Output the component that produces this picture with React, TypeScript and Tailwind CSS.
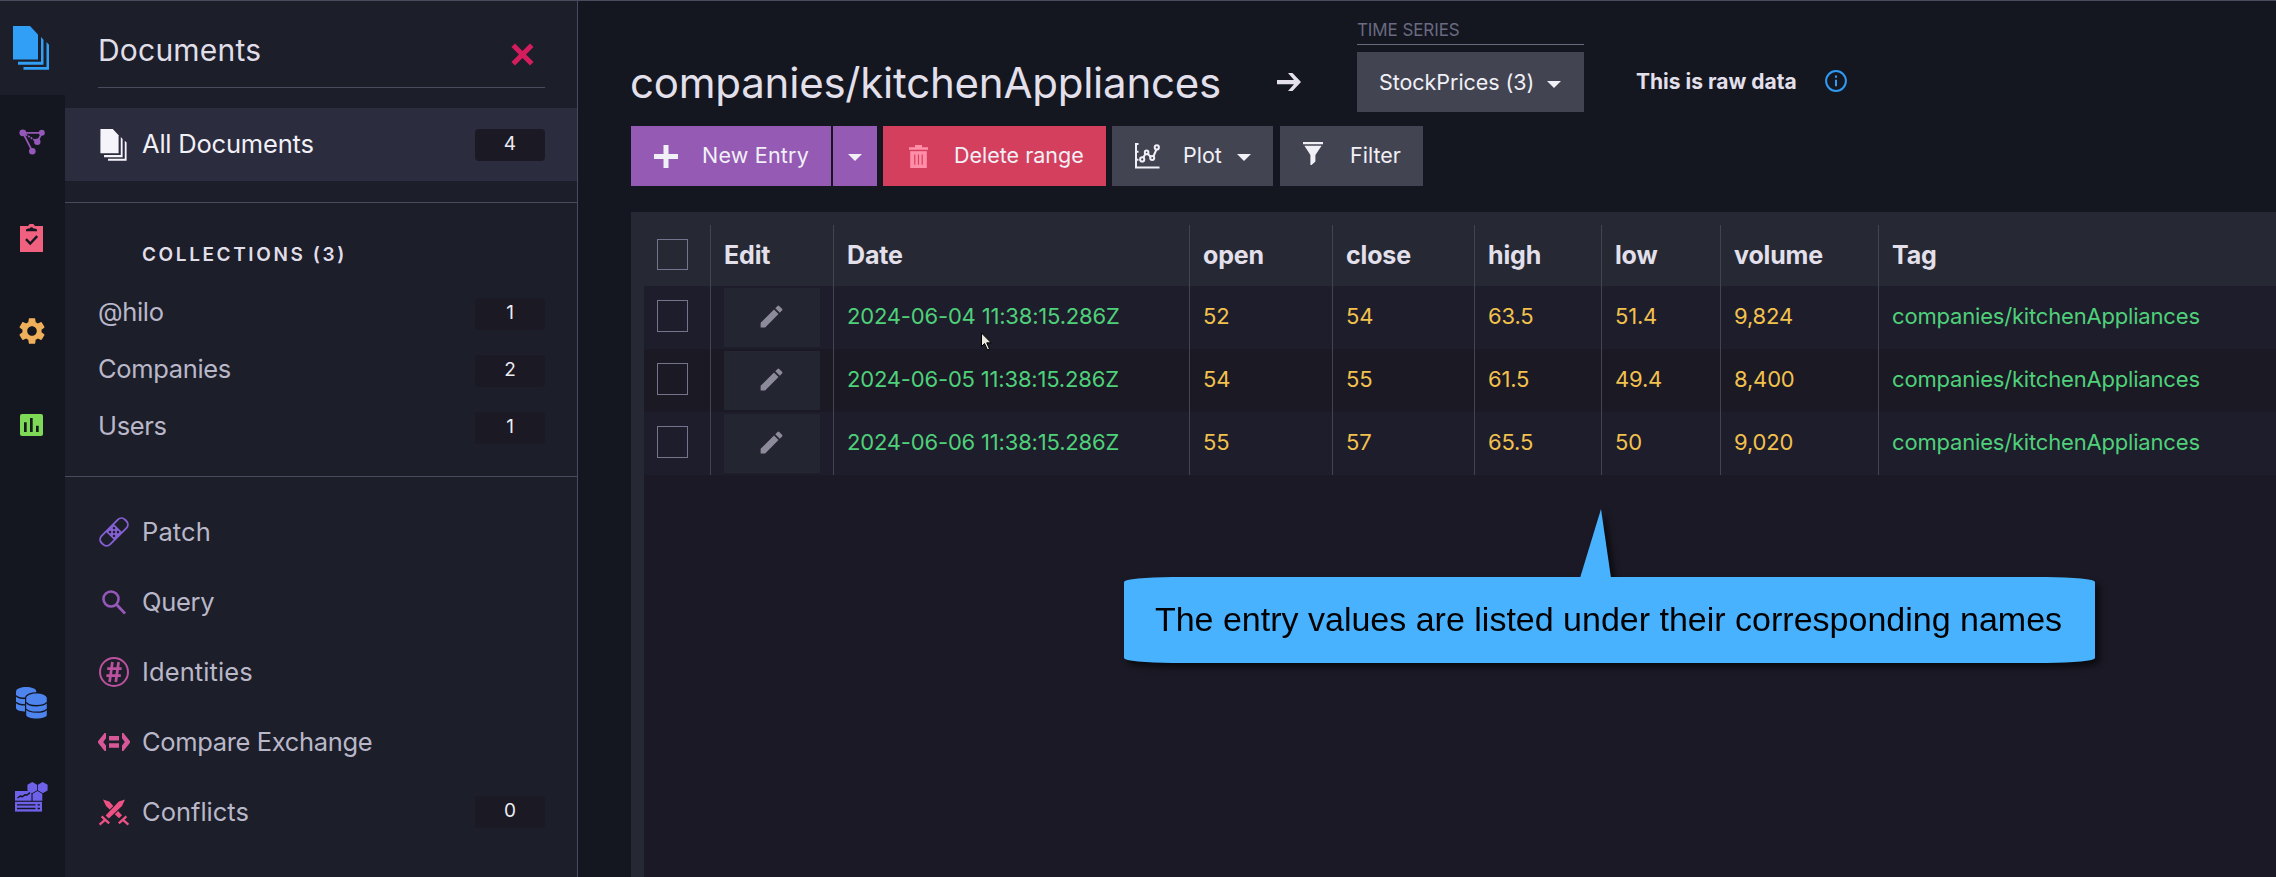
import React from "react";
import { MdEdit, MdSettings } from "react-icons/md";

const DocumentsIcon = ({ className }: { className: string }) => (
  <svg viewBox="0 0 36 44" className={className} fill="currentColor">
    <path d="M0 0h17l8 8.5v25H0z" />
    <path d="M5 35.8h23V11l2.5 2.7v25H5z" />
    <path d="M10.5 41h23V16l2.5 2.7v25H10.5z" />
  </svg>
);

const GraphIcon = () => (
  <svg viewBox="0 0 26 26" className="size-[26px]" fill="#9558b8" stroke="#9558b8">
    <path d="M4 3.8h19M4 3.8l9.3 18.4M23 3.8l-4.7 9" strokeWidth="1.8" fill="none" />
    <path d="M4 3.8l14.3 9" strokeWidth="1.8" strokeDasharray="2 1" fill="none" />
    <g stroke="none">
      <circle cx="3.8" cy="3.8" r="3.4" />
      <circle cx="22.8" cy="3.7" r="3" />
      <circle cx="18.3" cy="12.8" r="3.2" />
      <circle cx="13.3" cy="22.2" r="3.3" />
    </g>
  </svg>
);

const ClipboardIcon = () => (
  <svg viewBox="0 0 23 28" className="h-7 w-[23px]">
    <path d="M0 2h8.2a3.5 3.5 0 0 1 6.6 0H23v26H0z" fill="#f0607f" />
    <path d="M6 7.2V5.4L8 4.6h1.600a2 2 0 0 1 3.800 0H15l2 .8v1.800z" fill="#141620" />
    <path d="M6 15.2l4.2 4.3 7-7.4" fill="none" stroke="#141620" strokeWidth="2.4" />
  </svg>
);

const StatsIcon = () => (
  <svg viewBox="0 0 23 22" className="h-[22px] w-[23px]">
    <rect width="23" height="22" rx="2" fill="#7ed957" />
    <path d="M4 8.3h2.7V18H4zM10 4h2.7v14H10zM16 11.7h2.7V18H16z" fill="#141c20" />
  </svg>
);

const DatabasesIcon = () => (
  <svg viewBox="0 0 31 32" className="h-8 w-[31px]" fill="#4d84ee">
    <path d="M0 4.6C0-1.5 20.3-1.5 20.3 4.6V21c0 4.8-20.3 4.8-20.3 0z" />
    <path d="M0 8.6c2 2.6 7 2.8 11 2.6M0 15.2c2 2.4 6 2.8 11 2.6" fill="none" stroke="#141620" strokeWidth="1.4" />
    <path d="M10.2 11.2c0-6.4 20.6-6.4 20.6 0v16.6c0 5-20.6 5-20.6 0z" stroke="#141620" strokeWidth="2.4" paintOrder="stroke" />
    <path d="M10.2 15.4c2.5 4.4 18 4.4 20.6 0M10.2 22c2.5 4.2 18 4.2 20.6 0" fill="none" stroke="#141620" strokeWidth="1.4" />
  </svg>
);

const StudioIcon = () => (
  <svg viewBox="0 0 33 30" className="h-[30px] w-[33px]" fill="#6f62ea">
    <path d="M17.3 0l4.8 2.8v5.6l-4.8 2.8-4.9-2.8V2.8zM27.7 0l4.9 2.8v5.6l-4.9 2.8-4.8-2.8V2.8z" />
    <path d="M0 9h16.5v9.7H0z" />
    <path d="M2.5 16l3-2.2 1.5 1 3-2 2 .2 3-2.4" fill="none" stroke="#141620" strokeWidth="1.5" />
    <path d="M22.5 9l4.8 2.8v6.9h-9.7v-6.9z" stroke="#141620" strokeWidth="1.4" paintOrder="stroke" />
    <path d="M0 19.8h27v9.8H0z" />
    <path d="M2 22.9h18.5M2 26.5h18.5M22.5 22.9h2.5M22.5 26.5h2.5" stroke="#141620" strokeWidth="1.3" />
  </svg>
);

const PatchIcon = () => (
  <svg viewBox="0 0 30 30" className="size-[30px]">
    <g transform="rotate(-45 15 15)">
      <rect x="-1.5" y="9" width="33" height="12" rx="5" fill="none" stroke="#8560d4" strokeWidth="1.9" />
      <rect x="9.5" y="9" width="11" height="12" fill="#8560d4" />
      <g fill="#1c1e2a">
        <circle cx="12.2" cy="12.2" r="1.25" />
        <circle cx="17.8" cy="12.2" r="1.25" />
        <circle cx="15" cy="15" r="1.25" />
        <circle cx="12.2" cy="17.8" r="1.25" />
        <circle cx="17.8" cy="17.8" r="1.25" />
      </g>
    </g>
  </svg>
);

const QueryIcon = () => (
  <svg viewBox="0 0 24 25" className="h-[25px] w-6" fill="none" stroke="#9558b8">
    <circle cx="9" cy="9" r="7.5" strokeWidth="2.6" />
    <path d="M14 14l9 9.6" strokeWidth="2.8" />
  </svg>
);

const IdentitiesIcon = () => (
  <svg viewBox="0 0 30 30" className="size-[30px]" fill="none" stroke="#bb519f">
    <circle cx="15" cy="15" r="14" strokeWidth="2" />
    <path d="M13.4 5L10.6 25M19.6 5l-2.8 20M8.2 11.6h14.4M7.4 18.6h14.4" strokeWidth="2.7" />
  </svg>
);

const CompareIcon = () => (
  <svg viewBox="0 0 32 18" className="h-[18px] w-8 shrink-0" fill="#d75898">
    <path d="M8 0v5.2L5.2 9 8 12.6V18H6.6L0 9.8V8.2L6.6 0zM24 0v5.2L26.8 9 24 12.6V18h1.4L32 9.8V8.2L25.4 0z" />
    <path d="M11 3h10v4.6H11zM11 10.2h10v4.6H11z" />
  </svg>
);

const ConflictsIcon = () => (
  <svg viewBox="0 0 32 27" className="h-[27px] w-8 shrink-0" fill="#ee5285" stroke="#ee5285">
    <path d="M5 .6l6.2 2L24 16.2l-3 3L8 7z" stroke="none" />
    <path d="M20.8 24.4l7.6-7M24.4 20.4l6 5.2" strokeWidth="2.3" />
    <path d="M27 .6l-6.200 2L7.600 16.400l3.200 3.200L24 7z" stroke="#1c1e2a" strokeWidth="2" paintOrder="stroke" />
    <path d="M11.2 24.4l-7.600-7M7.600 20.400l-6 5.200" strokeWidth="2.3" />
  </svg>
);

const CloseIcon = () => (
  <svg viewBox="0 0 23 23" className="size-[23px]" stroke="#d31d5c" strokeWidth="5">
    <path d="M2.2 2.2l18.6 18.6M20.8 2.2L2.2 20.8" />
  </svg>
);

const Caret = () => (
  <svg viewBox="0 0 14 7" className="h-[7px] w-3.5 shrink-0" fill="#f1f0f7">
    <path d="M0 0h14L7 7z" />
  </svg>
);

const PlusIcon = () => (
  <svg viewBox="0 0 24 23" className="h-[23px] w-6 shrink-0" stroke="#f1f0f7" strokeWidth="5">
    <path d="M0 11.5h24M12 0v23" />
  </svg>
);

const TrashIcon = () => (
  <svg viewBox="0 0 19 23" className="h-[23px] w-[19px] shrink-0" fill="#ff8fa8">
    <path d="M0 2.3h6V0h7v2.3h6v2.4H0z" />
    <path d="M1.2 6.2h16.6V23H1.2z" />
    <path d="M5.8 9.5v10.2M9.5 9.5v10.2M13.2 9.5v10.2" stroke="#d43f5e" strokeWidth="1.2" />
  </svg>
);

const PlotIcon = () => (
  <svg viewBox="0 0 25 26" className="h-[26px] w-[25px] shrink-0" fill="none" stroke="#f1f0f7" strokeWidth="2">
    <path d="M3.5 1H1v23.5h23.5M1 8.8h2.5M1 16.8h2.5" />
    <path d="M8.3 14.6l2.2-3.8M13 10.8l2.8 3.4M18.6 13l3-7" />
    <circle cx="7.2" cy="16.4" r="2.1" />
    <circle cx="11.6" cy="9.4" r="1.8" />
    <circle cx="17.2" cy="15" r="2" />
    <circle cx="21.8" cy="4.4" r="2.1" />
  </svg>
);

const FilterIcon = () => (
  <svg viewBox="0 0 20 23" className="h-[23px] w-5 shrink-0" fill="#f1f0f7">
    <path d="M0 0h20v2.2H0zM1.4 3.8h17.2L12.4 13v6.6L8.6 23h-1.2V13z" />
  </svg>
);

const ArrowIcon = () => (
  <svg viewBox="0 0 24 18" className="h-[18px] w-6" fill="#e3e0ec">
    <path d="M11 0h4.5L24 9l-8.5 9H11l6-6.8H0V7h17z" />
  </svg>
);

const InfoIcon = () => (
  <svg viewBox="0 0 22 22" className="size-[22px]" fill="none" stroke="#2f9bf4">
    <circle cx="11" cy="11" r="9.9" strokeWidth="2" />
    <path d="M11 9.8v6.4M11 5.6v2.2" strokeWidth="2" />
  </svg>
);

const Badge = ({ children }: { children: React.ReactNode }) => (
  <span className="ml-auto flex h-8 w-[70px] items-center justify-center rounded bg-[#1a1924] pb-px text-[19px] text-[#ecebf2]">
    {children}
  </span>
);

const collections = [
  { name: "@hilo", count: 1 },
  { name: "Companies", count: 2 },
  { name: "Users", count: 1 },
];

const tools = [
  { name: "Patch", icon: <PatchIcon />, tracking: "tracking-[0.1px]" },
  { name: "Query", icon: <QueryIcon />, tracking: "tracking-[-0.3px]" },
  { name: "Identities", icon: <IdentitiesIcon />, tracking: "tracking-[0.1px]" },
  { name: "Compare Exchange", icon: <CompareIcon />, tracking: "tracking-[-0.35px]" },
  { name: "Conflicts", icon: <ConflictsIcon />, tracking: "tracking-normal", count: 0 },
];

const headers = ["Edit", "Date", "open", "close", "high", "low", "volume", "Tag"];

const rows = [
  ["2024-06-04 11:38:15.286Z", "52", "54", "63.5", "51.4", "9,824", "companies/kitchenAppliances"],
  ["2024-06-05 11:38:15.286Z", "54", "55", "61.5", "49.4", "8,400", "companies/kitchenAppliances"],
  ["2024-06-06 11:38:15.286Z", "55", "57", "65.5", "50", "9,020", "companies/kitchenAppliances"],
];

const columns = "grid grid-cols-[67px_123px_356px_143px_142px_127px_119px_158px_1fr]";
const cell = "flex items-center border-r border-[#444450] pl-[13px]";
const button = "flex h-[60px] items-center text-[21.5px] text-[#f1f0f7]";

const Rail = () => (
  <nav className="flex w-[65px] shrink-0 flex-col bg-[#141620] pb-[33px]">
    <div className="flex h-[94px] items-center bg-[#1c1e2a] pl-[13px]">
      <DocumentsIcon className="h-11 w-9 text-[#319ff5]" />
    </div>
    <div className="flex w-[63px] flex-col">
      <div className="flex h-[94px] items-center justify-center"><GraphIcon /></div>
      <div className="flex h-[97px] items-center justify-center"><ClipboardIcon /></div>
      <div className="flex h-[90px] items-center justify-center"><MdSettings className="size-8 text-[#efb05c]" /></div>
      <div className="flex h-[98px] items-center justify-center"><StatsIcon /></div>
    </div>
    <div className="mt-auto flex w-[63px] flex-col">
      <div className="flex h-[94px] items-center justify-center"><DatabasesIcon /></div>
      <div className="flex h-[94px] items-center justify-center"><StudioIcon /></div>
    </div>
  </nav>
);

const Panel = () => (
  <aside className="flex w-[513px] shrink-0 flex-col border-r border-[#4a4a5e] bg-[#1c1e2a]">
    <div className="ml-[33px] mr-8 flex h-[87px] items-center justify-between border-b border-[#4a4a5e] pr-[11px] pt-3">
      <h2 className="text-[30px] leading-none tracking-[0.2px] text-[#e0dee9]">Documents</h2>
      <div className="pt-2"><CloseIcon /></div>
    </div>
    <div className="mt-5 flex h-[73px] items-center bg-[#2b2c3e] pl-[35px] pr-8">
      <DocumentsIcon className="h-8 w-[27px] text-[#f6f4fb]" />
      <span className="pl-[15px] text-[25.5px] tracking-[-0.2px] text-[#f1f0f7]">All Documents</span>
      <Badge>4</Badge>
    </div>
    <div className="mt-[21px] border-y border-[#4a4a5e] pb-5 pt-[37px]">
      <h3 className="pb-4 pl-[77px] text-[19px] font-semibold leading-[29px] tracking-[2.6px] text-[#e0dee9]">COLLECTIONS (3)</h3>
      {collections.map((c) => (
        <div key={c.name} className="flex h-[57px] items-center pl-[33px] pr-8">
          <span className="pb-[3px] text-[25.5px] tracking-[-0.35px] text-[#b9b7c8]">{c.name}</span>
          <Badge>{c.count}</Badge>
        </div>
      ))}
    </div>
    <div className="pt-5">
      {tools.map((t) => (
        <div key={t.name} className="flex h-[70px] items-center pl-8 pr-8">
          <span className="flex w-[34px] justify-center">{t.icon}</span>
          <span className={`pl-[11px] text-[25.5px] text-[#b9b7c8] ${t.tracking}`}>{t.name}</span>
          {t.count !== undefined && <Badge>{t.count}</Badge>}
        </div>
      ))}
    </div>
  </aside>
);

const Header = () => (
  <header className="flex h-[111px] pl-[52px]">
    <h1 className="w-[647px] pt-[58px] text-[42px] leading-[48px] tracking-[-0.22px] text-[#e3e0ec]">companies/kitchenAppliances</h1>
    <div className="w-20 pt-[72px]"><ArrowIcon /></div>
    <div className="w-[227px]">
      <div className="flex h-11 items-end border-b border-[#6a6a80] pb-1 text-[17px] leading-[20px] tracking-[-0.1px] text-[#6a6a80]">TIME SERIES</div>
      <button className={`${button} mt-[7px] w-full bg-[#424452] pl-[22px] tracking-[-0.05px]`}>
        StockPrices (3)
        <span className="pl-[13px] pt-[5px]"><Caret /></span>
      </button>
    </div>
    <div className="pl-[52px] pt-[66px] text-[21px] font-bold leading-[30px] text-[#e3e0ec]">This is raw data</div>
    <div className="pl-7 pt-[69px]"><InfoIcon /></div>
  </header>
);

const Toolbar = () => (
  <div className="flex pl-[53px] pt-3.5">
    <button className={`${button} w-[200px] bg-[#955ab4] pl-[23px]`}>
      <PlusIcon />
      <span className="pb-0.5 pl-6 tracking-[0.2px]">New Entry</span>
    </button>
    <button className={`${button} ml-0.5 w-11 justify-center bg-[#955ab4] pt-[3px]`}><Caret /></button>
    <button className={`${button} ml-1.5 w-[223px] bg-[#d43f5e] pl-[26px]`}>
      <TrashIcon />
      <span className="pb-0.5 pl-[26px]">Delete range</span>
    </button>
    <button className={`${button} ml-1.5 w-[161px] bg-[#424452] pl-[23px]`}>
      <PlotIcon />
      <span className="pb-0.5 pl-[23px]">Plot</span>
      <span className="pl-[15px] pt-[3px]"><Caret /></span>
    </button>
    <button className={`${button} ml-[7px] w-[143px] bg-[#424452] pl-[23px]`}>
      <span className="pb-[5px]"><FilterIcon /></span>
      <span className="pb-0.5 pl-[27px]">Filter</span>
    </button>
  </div>
);

const Table = () => (
  <section className="ml-[53px] mt-[26px] flex grow flex-col bg-[#262934] pl-[13px] pt-[13px]">
    <div className={`${columns} h-[61px] text-[25px] font-bold tracking-[-0.15px] text-[#e3e0ec]`}>
      <div className={`${cell} pb-0.5`}><span className="size-[31px] border border-[#74748c]" /></div>
      {headers.map((h) => (
        <div key={h} className={`${cell} last:border-r-0`}>{h}</div>
      ))}
    </div>
    <div className="grow bg-[#1a1925]">
      {rows.map((row) => (
        <div key={row[0]} className={`${columns} h-[63px] text-[22px] tracking-[-0.18px] odd:bg-[#1e1d2b] even:bg-[#1a1924]`}>
          <div className={`${cell} pb-[3px]`}><span className="h-8 w-[31px] border border-[#74748c]" /></div>
          <div className={cell}>
            <button className="flex h-[59px] w-24 items-center justify-center bg-[#232530] pb-0.5 pr-px">
              <MdEdit className="size-[29px] text-[#8d8a9b]" />
            </button>
          </div>
          {row.map((value, i) => (
            <div
              key={i}
              className={`${cell} pb-[3px] last:border-r-0 ${i === 0 || i === 6 ? "text-[#4fd07a]" : "text-[#f2c14e]"}`}
            >
              {value}
            </div>
          ))}
        </div>
      ))}
    </div>
  </section>
);

const Callout = () => (
  <div className="absolute left-[1124px] top-[508px] drop-shadow-[4px_4px_3px_rgba(0,0,0,0.65)]">
    <svg viewBox="0 0 971 69" className="block h-[69px] w-[971px]" fill="#48b2ff">
      <path d="M477 0L456 69h31z" />
    </svg>
    <div className="-mt-px flex h-[86px] w-[971px] items-center justify-center rounded-[48px/5px] bg-[#48b2ff] pb-0.5 pr-0.5 font-['Liberation_Sans',sans-serif] text-[34px] text-black">
      <span className="whitespace-nowrap">The entry values are listed under their corresponding names</span>
    </div>
  </div>
);

const Cursor = () => (
  <svg viewBox="0 0 11 19" className="absolute left-[981px] top-[331px] h-[19px] w-[11px]" fill="#e9e9dc" stroke="#000" strokeWidth="1">
    <path d="M.5 1v13.5l3-3 3 6.5 2-1-2.8-6.2h4.5z" />
  </svg>
);

export default function App() {
  return (
    <div className="relative flex h-[877px] w-[2276px] overflow-hidden border-t border-[#4a4a5e] bg-[#141620] font-['Inter',sans-serif]">
      <Rail />
      <Panel />
      <main className="flex grow flex-col">
        <Header />
        <Toolbar />
        <Table />
      </main>
      <Callout />
      <Cursor />
    </div>
  );
}
